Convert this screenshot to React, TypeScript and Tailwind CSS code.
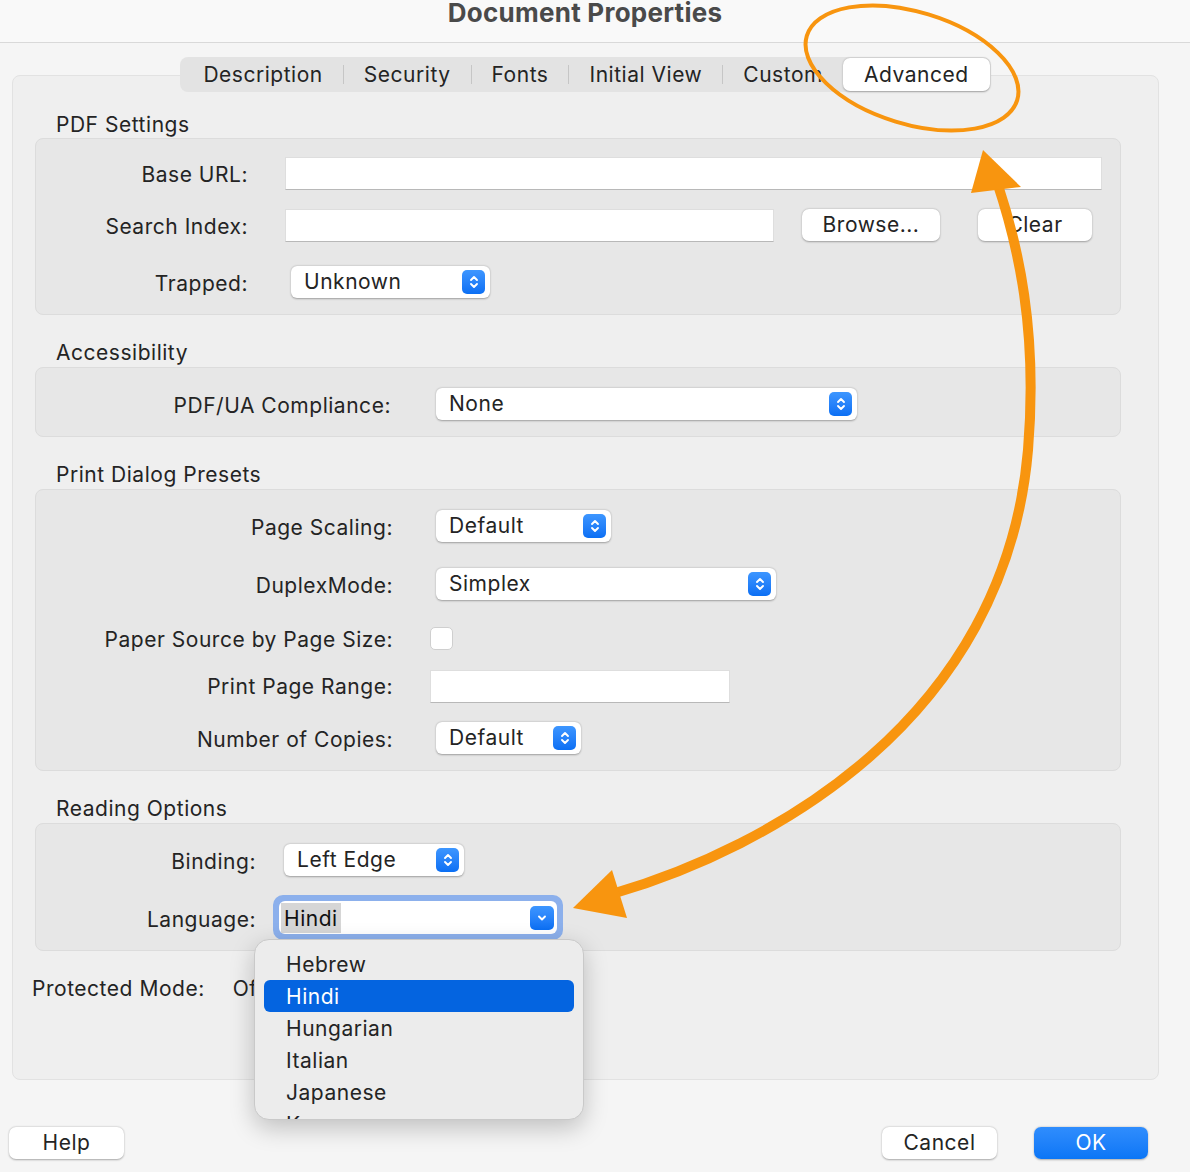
import React from "react";

function Stepper() {
  return (
    <span className="flex h-[24px] w-[23px] items-center justify-center rounded-[5px] bg-gradient-to-b from-[#3d96ff] to-[#0a6ff4]">
      <svg width="12" height="18" viewBox="0 0 12 18" fill="none" stroke="white" strokeWidth="1.9" strokeLinecap="round" strokeLinejoin="round">
        <path d="M3 7 L6 4 L9 7" />
        <path d="M3 11 L6 14 L9 11" />
      </svg>
    </span>
  );
}

function Select({ text, cls }: { text: string; cls: string }) {
  return (
    <div className={`flex h-[32px] items-center justify-between rounded-[6px] bg-white pl-[13px] pr-[5px] shadow-[0_0.5px_2px_rgba(0,0,0,0.32)] ${cls}`}>
      <span>{text}</span>
      <Stepper />
    </div>
  );
}

function Button({ text, cls }: { text: string; cls: string }) {
  return (
    <div className={`flex h-[32px] items-center justify-center rounded-[7px] bg-white shadow-[0_0.5px_2px_rgba(0,0,0,0.32)] ${cls}`}>
      {text}
    </div>
  );
}

function Input({ cls }: { cls: string }) {
  return <div className={`h-[33px] border border-[#dedede] border-b-[#b8b8b8] bg-white ${cls}`} />;
}

function Heading({ text }: { text: string }) {
  return <div className="ml-[43px] pt-[26px] pb-[2px] leading-[24px]">{text}</div>;
}

function Group({ children, cls }: { children: React.ReactNode; cls: string }) {
  return (
    <div className={`ml-[22px] mr-[37px] rounded-[8px] border border-[#dcdcdc] bg-[#e7e7e7] ${cls}`}>
      {children}
    </div>
  );
}

function Tab({ text }: { text: string }) {
  return <div className="px-[20px] leading-[33px]">{text}</div>;
}

function Sep() {
  return <div className="h-[19px] w-px bg-[#c6c6c6]" />;
}

export default function App() {
  return (
    <div className="relative h-[1172px] w-[1190px] overflow-hidden bg-[#f5f5f5] font-['Inter','Noto_Sans',sans-serif] text-[21px] tracking-[0.025em] text-[#242424]">
      {/* Title bar */}
      <div className="h-[43px] border-b border-[#d9d9d9] bg-[#f9f9f9] pr-[20px] pt-[1px] text-center text-[26px] font-bold leading-[24px] tracking-[0.01em] text-[#4a4a4a]">
        Document Properties
      </div>

      {/* Tab panel */}
      <div className="ml-[12px] mr-[31px] mt-[32px] h-[1005px] rounded-[8px] border border-[#e2e2e2] bg-[#efefef]">
        <div className="-mt-[19px] flex justify-center">
          <div className="flex h-[35px] items-center rounded-[8px] bg-[#e3e3e3] pl-[3px] pr-[1px]">
            <Tab text="Description" />
            <Sep />
            <Tab text="Security" />
            <Sep />
            <Tab text="Fonts" />
            <Sep />
            <Tab text="Initial View" />
            <Sep />
            <Tab text="Custom" />
            <div className="rounded-[7px] bg-white px-[21px] leading-[33px] shadow-[0_0.5px_2px_rgba(0,0,0,0.3)]">
              Advanced
            </div>
          </div>
        </div>

        <div className="ml-[43px] pt-[21px] pb-[1px] leading-[24px]">PDF Settings</div>
        <Group cls="pt-[18px] pb-[16px]">
          <div className="flex h-[33px] items-center">
            <div className="w-[212px] pt-[2px] text-right">Base URL:</div>
            <Input cls="ml-[37px] w-[817px]" />
          </div>
          <div className="mt-[19px] flex h-[33px] items-center">
            <div className="w-[212px] pt-[2px] text-right">Search Index:</div>
            <Input cls="ml-[37px] w-[489px]" />
            <Button text="Browse..." cls="ml-[28px] w-[138px] -mt-[2px]" />
            <Button text="Clear" cls="ml-[38px] w-[114px] -mt-[2px]" />
          </div>
          <div className="mt-[24px] flex h-[32px] items-center">
            <div className="w-[212px] pt-[3px] text-right">Trapped:</div>
            <Select text="Unknown" cls="ml-[43px] w-[199px]" />
          </div>
        </Group>

        <Heading text="Accessibility" />
        <Group cls="pt-[20px] pb-[16px]">
          <div className="flex h-[32px] items-center">
            <div className="w-[355px] pt-[3px] text-right">PDF/UA Compliance:</div>
            <Select text="None" cls="ml-[45px] w-[421px]" />
          </div>
        </Group>

        <Heading text="Print Dialog Presets" />
        <Group cls="pt-[20px] pb-[16px]">
          <div className="flex h-[32px] items-center">
            <div className="w-[357px] pt-[3px] text-right">Page Scaling:</div>
            <Select text="Default" cls="ml-[43px] w-[175px]" />
          </div>
          <div className="mt-[26px] flex h-[32px] items-center">
            <div className="w-[357px] pt-[3px] text-right">DuplexMode:</div>
            <Select text="Simplex" cls="ml-[43px] w-[340px]" />
          </div>
          <div className="mt-[22px] flex h-[32px] items-center">
            <div className="w-[357px] pt-[3px] text-right">Paper Source by Page Size:</div>
            <div className="ml-[37px] h-[23px] w-[23px] rounded-[5px] border border-[#cfcfcf] bg-white" />
          </div>
          <div className="mt-[16px] flex h-[32px] items-center">
            <div className="w-[357px] pt-[1px] text-right">Print Page Range:</div>
            <Input cls="ml-[37px] w-[300px]" />
          </div>
          <div className="mt-[20px] flex h-[32px] items-center">
            <div className="w-[357px] pt-[3px] text-right">Number of Copies:</div>
            <Select text="Default" cls="ml-[43px] w-[145px]" />
          </div>
        </Group>

        <Heading text="Reading Options" />
        <Group cls="pt-[20px] pb-[10px]">
          <div className="flex h-[32px] items-center">
            <div className="w-[220px] pt-[3px] text-right">Binding:</div>
            <Select text="Left Edge" cls="ml-[28px] w-[180px]" />
          </div>
          <div className="mt-[19px] flex h-[45px] items-center">
            <div className="w-[220px] pt-[5px] text-right">Language:</div>
            <div className="ml-[17px] flex h-[45px] w-[290px] items-center justify-center rounded-[10px] bg-[#8cb0ec]">
              <div className="flex h-[33px] w-[278px] items-center justify-between rounded-[6px] bg-white pl-[2px] pr-[3px]">
                <span className="bg-[#d6d6d6] px-[3px] pt-[1px] leading-[29px] text-[#111]">Hindi</span>
                <span className="flex h-[24px] w-[24px] items-center justify-center rounded-[5px] bg-gradient-to-b from-[#3d96ff] to-[#0a6ff4]">
                  <svg width="12" height="12" viewBox="0 0 12 12" fill="none" stroke="white" strokeWidth="1.9" strokeLinecap="round" strokeLinejoin="round">
                    <path d="M3 4.5 L6 7.5 L9 4.5" />
                  </svg>
                </span>
              </div>
            </div>
          </div>
        </Group>

        <div className="ml-[19px] mt-[26px] flex leading-[24px]">
          <span>Protected Mode:</span>
          <span className="ml-[28px]">Off</span>
        </div>
      </div>

      {/* Bottom buttons */}
      <div className="mt-[47px] flex pl-[9px] pr-[42px]">
        <Button text="Help" cls="w-[115px]" />
        <div className="flex-1" />
        <Button text="Cancel" cls="w-[115px]" />
        <div className="ml-[37px] flex h-[32px] w-[114px] items-center justify-center rounded-[7px] bg-gradient-to-b from-[#2f8dfd] to-[#0a76f6] text-white shadow-[0_0.5px_2px_rgba(0,0,0,0.3)]">
          OK
        </div>
      </div>

      {/* Dropdown menu */}
      <div className="absolute left-[254px] top-[939px] z-10 h-[181px] w-[330px] overflow-hidden rounded-[15px] border border-[#c9c9c9] bg-[#ececec] pt-[8px] shadow-[0_8px_24px_rgba(0,0,0,0.22)]">
        {["Hebrew", "Hindi", "Hungarian", "Italian", "Japanese", "Korean"].map((l) => (
          <div key={l} className="px-[9px]">
            <div
              className={
                l === "Hindi"
                  ? "flex h-[32px] items-center rounded-[6px] bg-[#0464e0] pl-[22px] pt-[2px] text-white"
                  : "flex h-[32px] items-center pl-[22px] pt-[2px]"
              }
            >
              {l}
            </div>
          </div>
        ))}
      </div>

      {/* Annotation overlay */}
      <svg className="pointer-events-none absolute left-0 top-0 z-20" width="1190" height="1172" viewBox="0 0 1190 1172">
        <ellipse cx="912" cy="68" rx="110" ry="56" transform="rotate(17 912 68)" fill="none" stroke="#f8950f" strokeWidth="4" />
        <path d="M612 894 C 770 848, 1005 720, 1028 450 C 1038 330, 1018 245, 997 182" fill="none" stroke="#f8950f" strokeWidth="10" />
        <polygon points="983,150 971,193 1021,187" fill="#f8950f" />
        <polygon points="573,908 612,870 627,918" fill="#f8950f" />
      </svg>
    </div>
  );
}
